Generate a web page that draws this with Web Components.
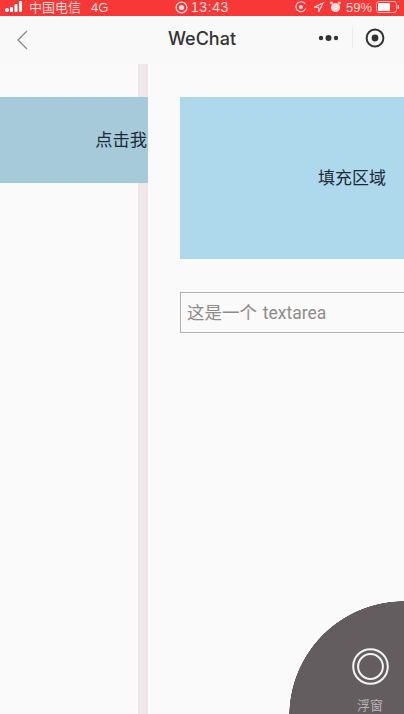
<!DOCTYPE html>
<html>
<head>
<meta charset="utf-8">
<style>
  html, body { margin: 0; height: 100%; }
  body {
    width: 404px;
    height: 714px;
    overflow: hidden;
    position: relative;
    background: #fafafa;
    font-family: "Liberation Sans", "Noto Sans CJK SC", sans-serif;
    display: flex;
    flex-direction: column;
  }
</style>
</head>
<body>
<status-bar></status-bar>
<nav-bar title="WeChat"></nav-bar>
<page-body>
  <side-panel>点击我</side-panel>
  <main-panel>
    <fill-area>填充区域</fill-area>
    <text-box>这是一个 textarea</text-box>
  </main-panel>
</page-body>
<float-button>浮窗</float-button>

<script>
class StatusBar extends HTMLElement {
    constructor() {
        super();
        this.attachShadow({ mode: 'open' });
    }

    connectedCallback() {
        this.shadowRoot.innerHTML = `
            <style>
                :host {
                    display: grid;
                    grid-template-columns: 1fr auto 1fr;
                    align-items: start;
                    height: 16px;
                    background: #f73836;
                    color: #fbdcdb;
                    font-family: "Liberation Sans", "Noto Sans CJK SC", sans-serif;
                    font-size: 13px;
                    line-height: 15px;
                    white-space: nowrap;
                }
                .left, .center, .right { display: flex; align-items: center; height: 14px; }
                .left { padding-left: 5px; }
                .left svg { margin-right: 5px; }
                .net { margin-left: 10px; }
                .center { gap: 3px; font-size: 14px; letter-spacing: .6px; }
                .right { justify-content: flex-end; padding-right: 4px; }
                .right .rec { margin-right: 6px; }
                .right .loc { margin-right: 6px; }
                .right .alarm { margin-right: 5px; }
                .right .pct { margin-right: 4px; }
            </style>
            <div class="left">
                <svg width="19" height="12" viewBox="0 0 19 12" fill="#fff">
                    <circle cx="2" cy="9" r="2"/>
                    <rect x="5" y="6" width="3" height="5" rx=".8"/>
                    <rect x="9.5" y="3" width="3" height="8" rx=".8"/>
                    <rect x="14" y="0" width="3" height="11" rx=".8"/>
                </svg>
                <span>中国电信</span><span class="net">4G</span>
            </div>
            <div class="center">
                <svg width="13" height="13" viewBox="0 0 13 13" fill="none" stroke="#fbdcdb">
                    <circle cx="6.5" cy="6.5" r="5.4" stroke-width="1.3"/>
                    <circle cx="6.5" cy="6.5" r="2.6" fill="#fbdcdb" stroke="none"/>
                </svg>
                <span>13:43</span>
            </div>
            <div class="right">
                <svg class="rec" width="12" height="12" viewBox="0 0 12 12" fill="none" stroke="#fbdcdb">
                    <path d="M10.6 7.6A5 5 0 1 1 10.2 3" stroke-width="1.1"/>
                    <circle cx="6" cy="6" r="2" fill="#fbdcdb" stroke="none"/>
                </svg>
                <svg class="loc" width="11" height="11" viewBox="0 0 11 11" fill="none" stroke="#fbdcdb" stroke-width="1.1">
                    <path d="M10 1 1 5.2h4.6V10z"/>
                </svg>
                <svg class="alarm" width="11" height="12" viewBox="0 0 11 12" fill="#fbdcdb">
                    <circle cx="5.5" cy="6.5" r="4.6"/>
                    <circle cx="1.5" cy="1.8" r="1.4"/>
                    <circle cx="9.5" cy="1.8" r="1.4"/>
                </svg>
                <span class="pct">59%</span>
                <svg width="24" height="12" viewBox="0 0 24 12" fill="none">
                    <rect x=".5" y=".5" width="20" height="11" rx="2.5" stroke="#fbdcdb" stroke-opacity=".7"/>
                    <rect x="2" y="2" width="12" height="8" rx="1" fill="#fff"/>
                    <rect x="21.5" y="4" width="1.5" height="4" rx=".7" fill="#fbdcdb"/>
                </svg>
            </div>
        `;
    }
}

class NavBar extends HTMLElement {
    constructor() {
        super();
        this.attachShadow({ mode: 'open' });
    }

    connectedCallback() {
        this.shadowRoot.innerHTML = `
            <style>
                :host {
                    display: grid;
                    grid-template-columns: 1fr auto 1fr;
                    align-items: center;
                    height: 48px;
                    background: #f9f9f9;
                    color: #333;
                }
                .back { padding-left: 16px; display: flex; }
                .title {
                    font-family: Inter, "Liberation Sans", sans-serif;
                    font-size: 18px;
                    font-weight: 500;
                    margin-bottom: 4px;
                }
                .actions { display: flex; align-items: center; justify-content: flex-end; padding-right: 19px; margin-bottom: 4px; }
                .sep { width: 1px; height: 20px; background: #ececec; margin: 0 12px; }
            </style>
            <div class="back">
                <svg width="12" height="20" viewBox="0 0 12 20" fill="none" stroke="#8a8a8a" stroke-width="1.3">
                    <path d="M11 1 2 10l9 9"/>
                </svg>
            </div>
            <div class="title">${this.getAttribute('title')}</div>
            <div class="actions">
                <svg width="22" height="8" viewBox="0 0 22 8" fill="#333">
                    <circle cx="3" cy="4" r="2.2"/>
                    <circle cx="10.5" cy="4" r="3"/>
                    <circle cx="18" cy="4" r="2.2"/>
                </svg>
                <div class="sep"></div>
                <svg width="20" height="20" viewBox="0 0 20 20" fill="none" stroke="#333">
                    <circle cx="10" cy="10" r="8.4" stroke-width="2"/>
                    <circle cx="10" cy="10" r="3.4" fill="#333" stroke="none"/>
                </svg>
            </div>
        `;
    }
}

class PageBody extends HTMLElement {
    constructor() {
        super();
        this.attachShadow({ mode: 'open' });
        this.shadowRoot.innerHTML = `
            <style>
                :host { display: flex; flex: 1; min-height: 0; }
            </style>
            <slot></slot>
        `;
    }
}

class SidePanel extends HTMLElement {
    constructor() {
        super();
        this.attachShadow({ mode: 'open' });
        this.shadowRoot.innerHTML = `
            <style>
                :host {
                    display: block;
                    flex: 0 0 148px;
                    padding-top: 33px;
                    box-sizing: border-box;
                    background: linear-gradient(to right, #fafafa 138px, #eee8ea 138px);
                }
                .btn {
                    display: flex;
                    align-items: center;
                    justify-content: flex-end;
                    box-sizing: border-box;
                    height: 86px;
                    padding: 0 1px 4px 0;
                    background: #a7cadb;
                    box-shadow: 0 0 1px #dfe4e8;
                    color: #1c2a38;
                    font-family: "Noto Sans CJK SC", sans-serif;
                    font-size: 17.3px;
                }
            </style>
            <div class="btn"><slot></slot></div>
        `;
    }
}

class MainPanel extends HTMLElement {
    constructor() {
        super();
        this.attachShadow({ mode: 'open' });
        this.shadowRoot.innerHTML = `
            <style>
                :host {
                    display: flex;
                    flex-direction: column;
                    flex: 1;
                    min-width: 0;
                    padding: 33px 0 0 32px;
                    gap: 33px;
                    background: #fafafa;
                }
            </style>
            <slot></slot>
        `;
    }
}

class FillArea extends HTMLElement {
    constructor() {
        super();
        this.attachShadow({ mode: 'open' });
        this.shadowRoot.innerHTML = `
            <style>
                :host {
                    display: flex;
                    align-items: center;
                    justify-content: flex-end;
                    box-sizing: border-box;
                    height: 162px;
                    padding: 0 18px 4px 0;
                    background: #aed8ec;
                    color: #1c2a38;
                    font-family: "Noto Sans CJK SC", sans-serif;
                    font-size: 17px;
                }
            </style>
            <slot></slot>
        `;
    }
}

class TextBox extends HTMLElement {
    constructor() {
        super();
        this.attachShadow({ mode: 'open' });
        this.shadowRoot.innerHTML = `
            <style>
                :host {
                    display: flex;
                    align-items: center;
                    box-sizing: border-box;
                    height: 41px;
                    padding: 0 0 2px 6px;
                    border: 1.5px solid #b5b1b1;
                    border-right: 0;
                    color: #8e8b8b;
                    font-family: Roboto, "Noto Sans CJK SC", sans-serif;
                    font-size: 17.5px;
                    word-spacing: 1.5px;
                    white-space: nowrap;
                }
            </style>
            <slot></slot>
        `;
    }
}

class FloatButton extends HTMLElement {
    constructor() {
        super();
        this.attachShadow({ mode: 'open' });
        this.shadowRoot.innerHTML = `
            <style>
                :host {
                    position: absolute;
                    right: 0;
                    bottom: 0;
                    width: 115px;
                    height: 113px;
                    overflow: hidden;
                    background: radial-gradient(circle 115px at 115px 115px, #635d5f 99.6%, transparent 100%);
                    color: #b8b4b5;
                    font-family: "Liberation Sans", "Noto Sans CJK SC", sans-serif;
                    font-size: 13px;
                }
                .inner {
                    display: flex;
                    flex-direction: column;
                    align-items: center;
                    width: 36px;
                    margin: 47px 0 0 63px;
                    gap: 13px;
                }
                .label { line-height: 15px; white-space: nowrap; }
            </style>
            <div class="inner">
                <svg width="37" height="37" viewBox="0 0 37 37" fill="none" stroke="#f4f3f3" stroke-width="2">
                    <circle cx="18.5" cy="18.5" r="17.3"/>
                    <circle cx="18.5" cy="18.5" r="12.4"/>
                </svg>
                <div class="label"><slot></slot></div>
            </div>
        `;
    }
}

customElements.define('status-bar', StatusBar);
customElements.define('nav-bar', NavBar);
customElements.define('page-body', PageBody);
customElements.define('side-panel', SidePanel);
customElements.define('main-panel', MainPanel);
customElements.define('fill-area', FillArea);
customElements.define('text-box', TextBox);
customElements.define('float-button', FloatButton);
</script>
</body>
</html>
